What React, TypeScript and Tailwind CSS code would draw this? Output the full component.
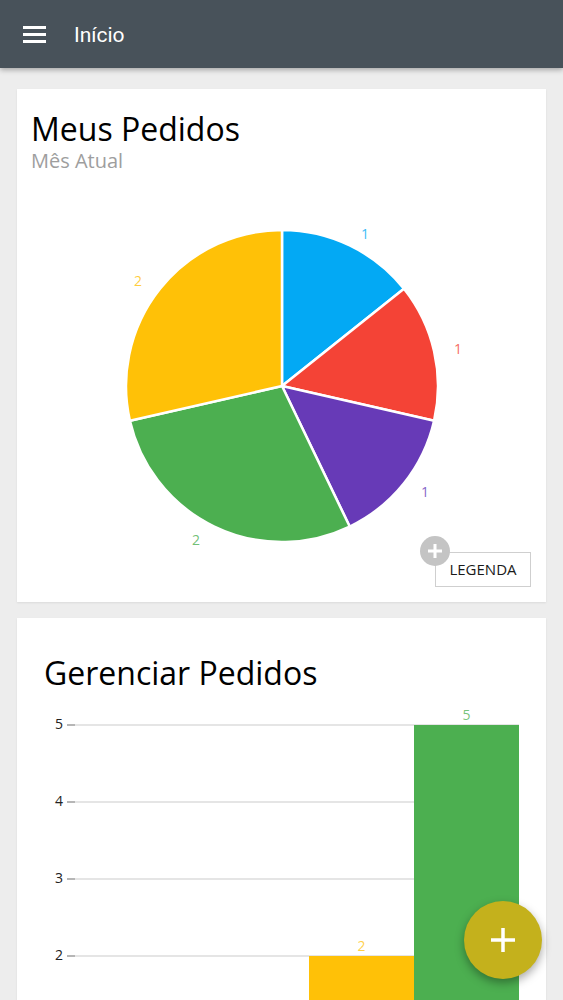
import React from "react";

// pie data, clockwise from 12 o'clock; label spots measured around the pie
const slices = [
  { value: 1, color: "#03a9f4", lx: 348, ly: 64 },
  { value: 1, color: "#f44336", lx: 441, ly: 179 },
  { value: 1, color: "#673ab7", lx: 408, ly: 322 },
  { value: 2, color: "#4caf50", lx: 179, ly: 370 },
  { value: 2, color: "#ffc107", lx: 121, ly: 111 },
];

const bars = [
  { value: 1, color: "#03a9f4" },
  { value: 1, color: "#f44336" },
  { value: 2, color: "#ffc107" },
  { value: 5, color: "#4caf50" },
];

const point = (cx: number, cy: number, r: number, deg: number) => {
  const a = (deg * Math.PI) / 180;
  return [cx + r * Math.sin(a), cy - r * Math.cos(a)];
};

const PieChart = () => {
  const cx = 265;
  const cy = 215;
  const r = 156;
  const total = slices.reduce((s, x) => s + x.value, 0);
  let start = 0;

  return (
    <svg width="529" height="430" viewBox="0 0 529 430" className="block">
      {slices.map((s, i) => {
        const sweep = (s.value / total) * 360;
        const end = start + sweep;
        const [x1, y1] = point(cx, cy, r, start);
        const [x2, y2] = point(cx, cy, r, end);
        const large = sweep > 180 ? 1 : 0;
        const d = `M ${cx} ${cy} L ${x1} ${y1} A ${r} ${r} 0 ${large} 1 ${x2} ${y2} Z`;
        start = end;
        return (
          <path key={i} d={d} fill={s.color} stroke="#ffffff" strokeWidth="2.5" strokeLinejoin="round" />
        );
      })}
      {slices.map((s, i) => (
        <text
          key={i}
          x={s.lx}
          y={s.ly}
          fill={s.color}
          fillOpacity="0.8"
          fontSize="14"
          fontFamily="'Open Sans', sans-serif"
          textAnchor="middle"
          dominantBaseline="middle"
        >
          {s.value}
        </text>
      ))}
    </svg>
  );
};

const BarChart = () => {
  const top = 33;
  const step = 77;
  const left = 58;
  const right = 502;
  const barW = 105;
  const firstBar = right - barW * bars.length;

  return (
    <svg width="529" height="480" viewBox="0 0 529 480" className="block">
      {[5, 4, 3, 2, 1, 0].map((v) => {
        const y = top + (5 - v) * step;
        return (
          <g key={v}>
            <line x1={left} y1={y} x2={right} y2={y} stroke="#dcdcdc" strokeWidth="1.5" />
            <line x1={50} y1={y} x2={left} y2={y} stroke="#9e9e9e" strokeWidth="1.5" />
            <text
              x={46}
              y={y}
              fill="#222222"
              fontSize="14"
              fontFamily="'Open Sans', sans-serif"
              textAnchor="end"
              dominantBaseline="middle"
            >
              {v}
            </text>
          </g>
        );
      })}
      {bars.map((b, i) => {
        const x = firstBar + i * barW;
        const y = top + (5 - b.value) * step;
        return (
          <g key={i}>
            <rect x={x} y={y} width={barW} height={top + 5 * step - y} fill={b.color} />
            <text
              x={x + barW / 2}
              y={y - 5}
              fill={b.color}
              fillOpacity="0.75"
              fontSize="14"
              fontFamily="'Open Sans', sans-serif"
              textAnchor="middle"
            >
              {b.value}
            </text>
          </g>
        );
      })}
    </svg>
  );
};

const App = () => {
  return (
    <div className="min-h-screen bg-[#ededed] font-['Open_Sans',sans-serif]">
      <header className="h-[68px] bg-[#48525a] flex items-center px-[23px] gap-[28px] shadow-[0_2px_5px_rgba(0,0,0,0.3)] relative z-10">
        <div className="flex flex-col gap-[4px] w-[23px] mt-[1px]">
          <span className="block h-[3px] bg-white" />
          <span className="block h-[3px] bg-white" />
          <span className="block h-[3px] bg-white" />
        </div>
        <h1 className="text-white text-[21px] mt-[3px] font-['Roboto',sans-serif]">Início</h1>
      </header>

      <main className="px-[17px] pt-[21px] pb-6 flex flex-col gap-4">
        <section className="relative bg-white h-[513px] shadow-[0_1px_2px_rgba(0,0,0,0.08)]">
          <div className="pt-[20px] px-[14px]">
            <h2 className="text-[32px] leading-[40px] text-black">Meus Pedidos</h2>
            <p className="text-[20px] leading-[24px] text-[#9e9e9e]">Mês Atual</p>
          </div>
          <div className="-mt-[2px]">
            <PieChart />
          </div>
          <button className="absolute left-[418px] top-[463px] w-[96px] h-[35px] border border-[#cfcfcf] bg-white text-[15px] text-[#1a1a1a] flex items-center justify-center">
            LEGENDA
          </button>
          <span className="absolute left-[403px] top-[447px] w-[30px] h-[30px] rounded-full bg-[#c4c4c4] flex items-center justify-center">
            <svg width="18" height="18" viewBox="0 0 18 18">
              <path d="M9 2v14M2 9h14" stroke="#fff" strokeWidth="3" />
            </svg>
          </span>
        </section>

        <section className="bg-white pb-6 shadow-[0_1px_2px_rgba(0,0,0,0.08)]">
          <div className="pt-[35px] px-[27px]">
            <h2 className="text-[32px] leading-[40px] text-black">Gerenciar Pedidos</h2>
          </div>
          <div className="-mt-[1px]">
            <BarChart />
          </div>
        </section>
      </main>

      <button className="fixed right-[21px] bottom-[21px] w-[78px] h-[78px] rounded-full bg-[#c4b11c] shadow-[0_4px_10px_rgba(0,0,0,0.35)] flex items-center justify-center">
        <svg width="26" height="26" viewBox="0 0 26 26">
          <path d="M13 1v24M1 13h24" stroke="#fff" strokeWidth="3.5" />
        </svg>
      </button>
    </div>
  );
};

export default App;
